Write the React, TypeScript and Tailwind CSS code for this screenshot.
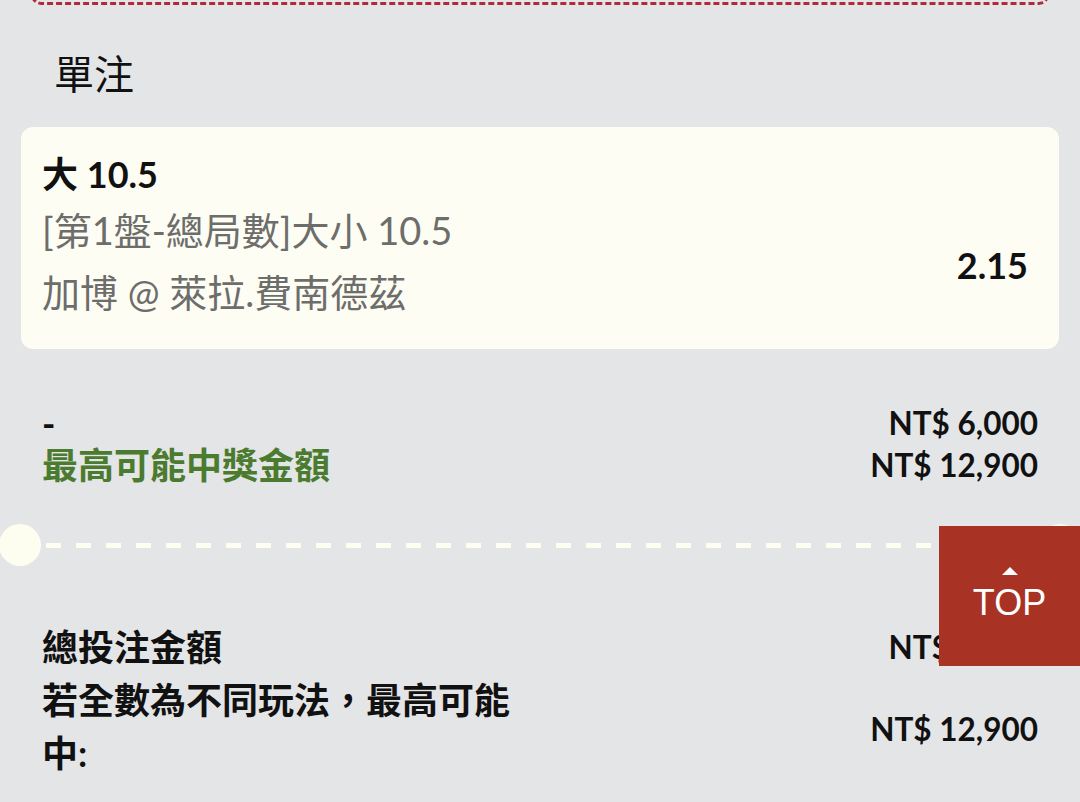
import React from "react";

export default function App() {
  return (
    <div
      className="relative min-h-[802px] w-[1080px] overflow-hidden bg-[#e4e5e7] text-[#111]"
      style={{ fontFamily: "Lato, 'Noto Sans CJK TC', 'Noto Sans', sans-serif" }}
    >
      {/* bottom of previous dashed box */}
      <div className="mx-[31px] -mt-[15px] h-[20px] rounded-b-[10px] border-[3px] border-t-0 border-dashed border-[#b02a3a]" />

      {/* title */}
      <div
        className="mt-[42px] pl-[54px] text-[40px] leading-[50px] font-normal text-[#111]"
        style={{ fontFamily: "'Noto Sans CJK TC', sans-serif" }}
      >
        單注
      </div>

      {/* bet card */}
      <div className="mx-[21px] mt-[30px] flex items-center justify-between rounded-[12px] bg-[#fdfdf4] pb-[26px] pl-[21px] pr-[31px] pt-[22px]">
        <div className="flex flex-col">
          <div className="text-[36px] font-bold leading-[50px] text-[#111]">大 10.5</div>
          <div className="text-[38px] leading-[62px] text-[#6d6d6b]">[第1盤-總局數]大小 10.5</div>
          <div className="text-[38px] leading-[62px] text-[#6d6d6b]">加博 @ 萊拉.費南德茲</div>
        </div>
        <div className="pt-[58px] text-[36px] font-bold leading-[50px] text-[#111]">2.15</div>
      </div>

      {/* summary */}
      <div className="mt-[53px] flex justify-between px-[42px] font-bold leading-[42px]">
        <div className="flex flex-col text-[36px]">
          <div className="text-[#111]">-</div>
          <div className="text-[#4b7b2f]">最高可能中獎金額</div>
        </div>
        <div className="flex flex-col items-end text-[31.5px] text-[#111]">
          <div>NT$ 6,000</div>
          <div>NT$ 12,900</div>
        </div>
      </div>

      {/* divider */}
      <div className="-mx-[1px] mt-[38px] flex h-[42px] items-center">
        <div className="h-[42px] w-[42px] shrink-0 rounded-full bg-[#fdfdf0]" />
        <div className="mx-[5px] h-[5px] flex-1 bg-[repeating-linear-gradient(90deg,#fdfdf0_0px,#fdfdf0_15px,transparent_15px,transparent_30px)]" />
        <div className="h-[42px] w-[42px] shrink-0 rounded-full bg-[#fdfdf0]" />
      </div>

      {/* totals */}
      <div className="mt-[55px] flex flex-col px-[42px] font-bold leading-[53px] text-[#111]">
        <div className="flex items-center justify-between">
          <div className="text-[36px]">總投注金額</div>
          <div className="text-[31.5px]">NT$ 6,000</div>
        </div>
        <div className="flex items-center justify-between">
          <div className="w-[500px] text-[36px]">若全數為不同玩法，最高可能中:</div>
          <div className="pt-[4px] text-[31.5px]">NT$ 12,900</div>
        </div>
      </div>

      {/* TOP button */}
      <div className="absolute right-0 top-[526px] flex h-[140px] w-[141px] flex-col items-center justify-center bg-[#a83325] text-white">
        <div className="-mt-[2px] h-0 w-0 border-x-[8px] border-b-[8px] border-x-transparent border-b-white" />
        <div className="mt-[8px] text-[36px] leading-[40px]" style={{ fontFamily: "'Liberation Sans', Arial, sans-serif" }}>
          TOP
        </div>
      </div>
    </div>
  );
}
